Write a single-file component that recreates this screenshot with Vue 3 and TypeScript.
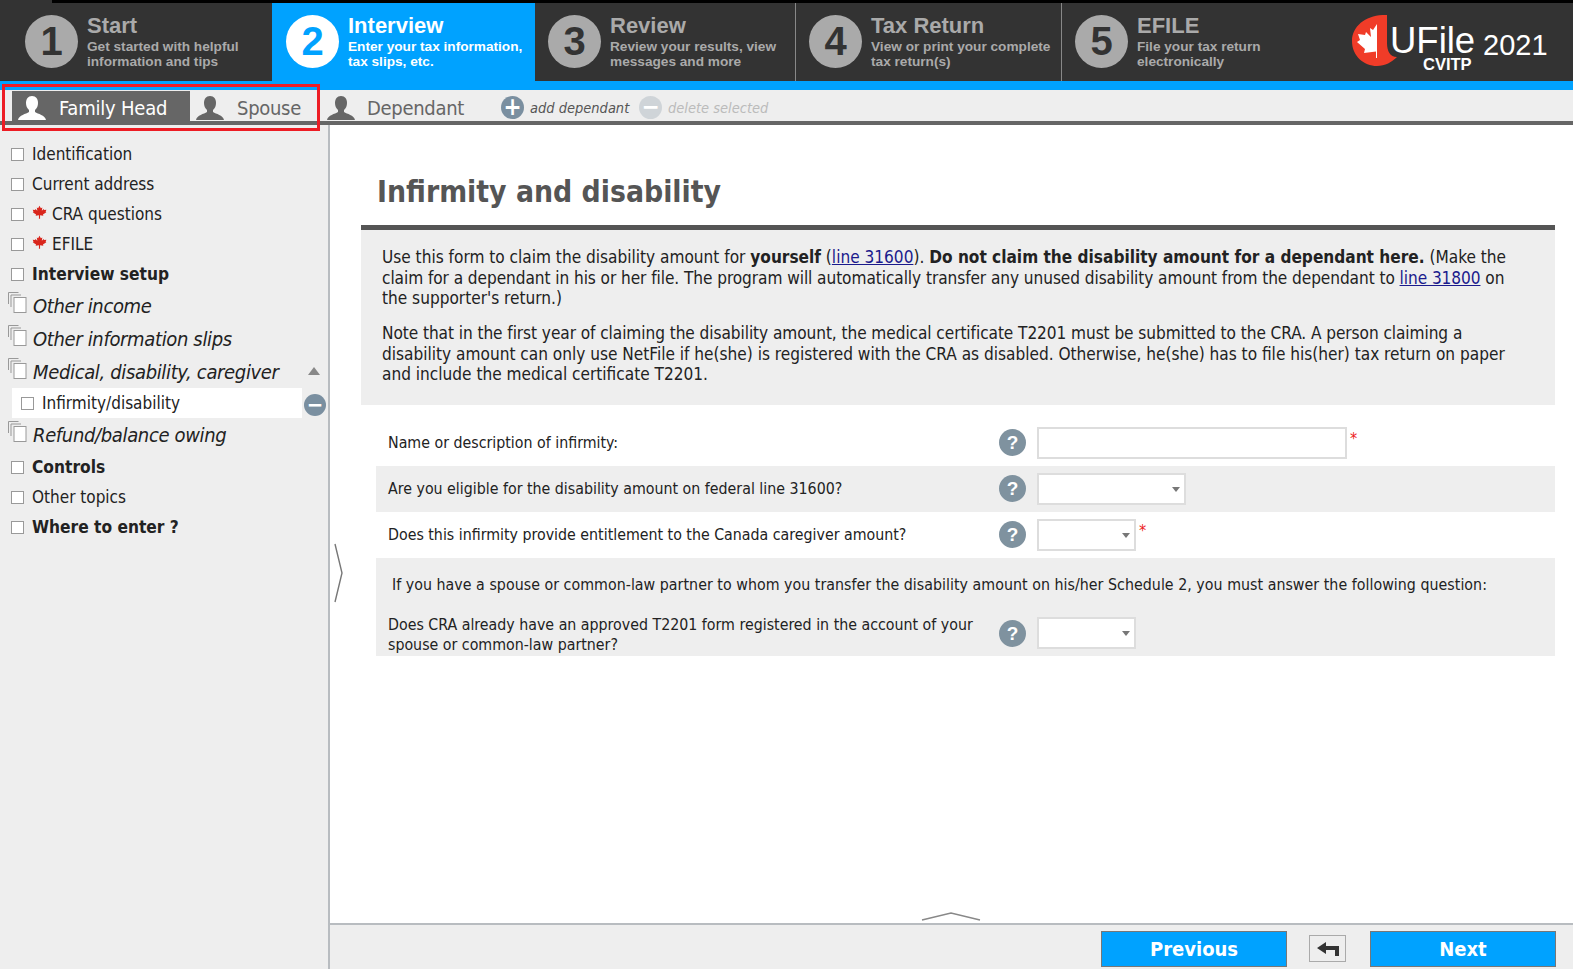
<script setup lang="ts">
interface Step {
  num: number
  title: string
  lines: string[]
  width: number
}

interface NavItem {
  label: string
  kind: 'plain' | 'bold' | 'flagged' | 'group' | 'child'
  collapse?: boolean
}

const steps: Step[] = [
  { num: 1, title: 'Start', lines: ['Get started with helpful', 'information and tips'], width: 272 },
  { num: 2, title: 'Interview', lines: ['Enter your tax information,', 'tax slips, etc.'], width: 263 },
  { num: 3, title: 'Review', lines: ['Review your results, view', 'messages and more'], width: 261 },
  { num: 4, title: 'Tax Return', lines: ['View or print your complete', 'tax return(s)'], width: 266 },
  { num: 5, title: 'EFILE', lines: ['File your tax return', 'electronically'], width: 279 }
]

const navItems: NavItem[] = [
  { label: 'Identification', kind: 'plain' },
  { label: 'Current address', kind: 'plain' },
  { label: 'CRA questions', kind: 'flagged' },
  { label: 'EFILE', kind: 'flagged' },
  { label: 'Interview setup', kind: 'bold' },
  { label: 'Other income', kind: 'group' },
  { label: 'Other information slips', kind: 'group' },
  { label: 'Medical, disability, caregiver', kind: 'group', collapse: true },
  { label: 'Infirmity/disability', kind: 'child' },
  { label: 'Refund/balance owing', kind: 'group' },
  { label: 'Controls', kind: 'bold' },
  { label: 'Other topics', kind: 'plain' },
  { label: 'Where to enter ?', kind: 'bold' }
]

const leafPath =
  'M12 1l2.2 4 2.3-1.1-.8 5.2 3-2.9.8 1.9 3.5-.6-1.2 3.6 1.2.6L17.5 15l.7 2-5.3-.8V22h-1.8v-5.8l-5.3.8.7-2L1.2 11.7l1.2-.6-1.2-3.6 3.5.6.8-1.9 3 2.9-.8-5.2L9.8 5z'
</script>

<template>
  <div class="app">
    <div class="topline"><div class="topline-black"></div></div>
    <header class="steps">
      <div
        v-for="step in steps"
        :key="step.num"
        class="step"
        :class="{ active: step.num === 2 }"
        :style="{ width: step.width + 'px' }"
      >
        <div class="step-num">{{ step.num }}</div>
        <div class="step-text">
          <div class="step-title">{{ step.title }}</div>
          <div v-for="line in step.lines" :key="line" class="step-line">{{ line }}</div>
        </div>
      </div>
      <div class="logo">
        <svg class="logo-mark" width="50" height="52" viewBox="0 0 50 52">
          <path
            d="M37 0C18-1 2 10 2 26c0 15 12 25 25 25 8 0 15-4 20-9-7 0-10-6-10-14z"
            fill="#f03c28"
          />
          <path
            d="M27 9l-4 6-3-2 1 9-5-5-1 3-7-1 2 6-3 2 8 7-1 4 12-1.5V43h1z"
            fill="#fff"
          />
        </svg>
        <div class="logo-name">UFile</div>
        <div class="logo-sub">CVITP</div>
        <div class="logo-year">2021</div>
      </div>
    </header>
    <div class="blue-strip"></div>

    <div class="tabs">
      <div class="tab active">
        <svg class="person" width="30" height="26" viewBox="0 0 30 26">
          <path d="M15 1c4 0 6 3 6 7 0 3-1 5-3 7v2c3 2 10 3 11 8H1c1-5 8-6 11-8v-2c-2-2-3-4-3-7 0-4 2-7 6-7z" />
        </svg>
        <span>Family Head</span>
      </div>
      <div class="tab spouse">
        <svg class="person" width="30" height="26" viewBox="0 0 30 26">
          <path d="M15 1c4 0 6 3 6 7 0 3-1 5-3 7v2c3 2 10 3 11 8H1c1-5 8-6 11-8v-2c-2-2-3-4-3-7 0-4 2-7 6-7z" />
        </svg>
        <span>Spouse</span>
      </div>
      <div class="tab dependant">
        <svg class="person" width="30" height="26" viewBox="0 0 30 26">
          <path d="M15 1c4 0 6 3 6 7 0 3-1 5-3 7v2c3 2 10 3 11 8H1c1-5 8-6 11-8v-2c-2-2-3-4-3-7 0-4 2-7 6-7z" />
        </svg>
        <span>Dependant</span>
      </div>
      <div class="tab-action">
        <span class="round-icon">+</span>
        <span>add dependant</span>
      </div>
      <div class="tab-action disabled">
        <span class="round-icon">&minus;</span>
        <span>delete selected</span>
      </div>
      <div class="red-box"></div>
    </div>

    <div class="body">
      <aside class="sidebar">
        <div v-for="item in navItems" :key="item.label" class="nav-item" :class="item.kind">
          <svg v-if="item.kind === 'group'" class="copy" width="19" height="21" viewBox="0 0 19 21">
            <path d="M.5 12V.5h10" />
            <path d="M3 15V3h10" />
            <rect x="6" y="5.5" width="12" height="15" fill="#fff" />
          </svg>
          <span v-else class="check"></span>
          <svg v-if="item.kind === 'flagged'" class="leaf" width="15" height="15" viewBox="0 0 24 24">
            <path :d="leafPath" fill="#d9261c" />
          </svg>
          <span class="nav-label">{{ item.label }}</span>
          <span v-if="item.collapse" class="collapse"></span>
          <span v-if="item.kind === 'child'" class="remove">&minus;</span>
        </div>
      </aside>

      <main class="main">
        <div class="expander">
          <svg width="12" height="60" viewBox="0 0 12 60">
            <path d="M3 1l7 29-7 29" fill="none" stroke="#777" stroke-width="1.4" />
          </svg>
        </div>
        <div class="content">
          <h1 class="title">Infirmity and disability</h1>
          <section class="notice">
            <p>
              Use this form to claim the disability amount for <b>yourself</b> (<a>line 31600</a>).
              <b>Do not claim the disability amount for a dependant here.</b> (Make the<br />
              <span class="tight">
                claim for a dependant in his or her file. The program will automatically transfer any unused disability
                amount from the dependant to <a>line 31800</a> on</span
              ><br />
              the supporter's return.)
            </p>
            <p>
              <span class="tight">
                Note that in the first year of claiming the disability amount, the medical certificate T2201 must be
                submitted to the CRA. A person claiming a</span
              ><br />
              disability amount can only use NetFile if he(she) is registered with the CRA as disabled. Otherwise,
              he(she) has to file his(her) tax return on paper<br />
              and include the medical certificate T2201.
            </p>
          </section>

          <div class="form">
            <div class="row">
              <label>Name or description of infirmity:</label>
              <span class="help">?</span>
              <span class="field text-field"></span>
              <span class="req">*</span>
            </div>
            <div class="row shaded">
              <label>Are you eligible for the disability amount on federal line 31600?</label>
              <span class="help">?</span>
              <span class="field select wide"></span>
            </div>
            <div class="row">
              <label>Does this infirmity provide entitlement to the Canada caregiver amount?</label>
              <span class="help">?</span>
              <span class="field select"></span>
              <span class="req">*</span>
            </div>
            <div class="spouse-block">
              <div class="spouse-intro">
                If you have a spouse or common-law partner to whom you transfer the disability amount on his/her
                Schedule 2, you must answer the following question:
              </div>
              <div class="row tall">
                <label>
                  Does CRA already have an approved T2201 form registered in the account of your<br />
                  spouse or common-law partner?
                </label>
                <span class="help">?</span>
                <span class="field select"></span>
              </div>
            </div>
          </div>
        </div>

        <div class="pull-up">
          <svg width="60" height="9" viewBox="0 0 60 9">
            <path d="M1 8l29-7 29 7" fill="none" stroke="#888" stroke-width="1.4" />
          </svg>
        </div>
        <footer class="footer">
          <button class="nav-btn">Previous</button>
          <button class="back-btn">
            <svg width="24" height="16" viewBox="0 0 24 16">
              <path d="M1 7l9-6v4h13v10h-4V9H10v4z" fill="#333" />
            </svg>
          </button>
          <button class="nav-btn">Next</button>
        </footer>
      </main>
    </div>
  </div>
</template>

<style>
html,
body {
  margin: 0;
  overflow: hidden;
  background: #fff;
}
</style>

<style scoped>
.app {
  height: 969px;
  display: flex;
  flex-direction: column;
  font-family: 'DejaVu Sans', sans-serif;
  font-stretch: condensed;
  color: #222;
  overflow: hidden;
}

.topline {
  height: 3px;
  background: #333;
}

.topline-black {
  height: 3px;
  margin-left: 52px;
  background: #000;
}

.steps {
  height: 78px;
  display: flex;
  background: #333;
  font-family: 'Liberation Sans', sans-serif;
  font-stretch: normal;
}

.step {
  box-sizing: border-box;
  display: flex;
  align-items: center;
  padding: 0 0 2px 13px;
  gap: 9px;
  color: #aaa;
  border-right: 1px solid #888;
}

.step:first-child {
  padding-left: 25px;
  border-right: none;
}

.step:nth-child(5) {
  border-right: none;
}

.step.active {
  background: #00a2ff;
  color: #fff;
  padding-left: 14px;
  border-right: none;
}

.step-num {
  width: 53px;
  height: 53px;
  flex: none;
  border-radius: 50%;
  background: #aaa;
  color: #333;
  font-size: 40px;
  font-weight: 700;
  line-height: 53px;
  text-align: center;
}

.active .step-num {
  background: #fff;
  color: #00a2ff;
}

.step-title {
  margin: -1px 0 1px;
  font-size: 22px;
  font-weight: 700;
  line-height: 25px;
}

.step-line {
  font-size: 13.65px;
  font-weight: 700;
  line-height: 15px;
  white-space: nowrap;
}

.logo {
  position: relative;
  flex: 1;
}

.logo-mark {
  position: absolute;
  left: 9px;
  top: 12px;
}

.logo-name {
  position: absolute;
  left: 49px;
  top: 24px;
  color: #fff;
  font-size: 36.5px;
  line-height: 28px;
}

.logo-sub {
  position: absolute;
  left: 82px;
  top: 53px;
  color: #fff;
  font-size: 16.5px;
  font-weight: 700;
  line-height: 16px;
}

.logo-year {
  position: absolute;
  left: 142px;
  top: 24px;
  color: #fff;
  font-size: 29px;
  line-height: 36px;
}

.blue-strip {
  height: 9px;
  background: #00a2ff;
}

.tabs {
  position: relative;
  height: 31px;
  display: flex;
  align-items: stretch;
  padding-left: 12px;
  background: #eee;
  border-bottom: 4px solid #666;
  color: #666;
  font-size: 20px;
  letter-spacing: -0.3px;
}

.tab {
  box-sizing: border-box;
  display: flex;
  align-items: center;
  gap: 12px;
  padding-top: 4px;
  white-space: nowrap;
}

.tab.active {
  width: 178px;
  margin-top: 1px;
  padding: 3px 0 0 5px;
  gap: 12px;
  letter-spacing: -0.2px;
  background: #666;
  color: #fff;
}

.tab.spouse {
  width: 136px;
  padding-left: 5px;
}

.tab.dependant {
  width: 175px;
  gap: 11px;
}

.person {
  fill: #666;
  flex: none;
}

.active .person {
  fill: #fff;
}

.tab-action {
  box-sizing: border-box;
  display: flex;
  align-items: center;
  gap: 6px;
  width: 138px;
  padding-top: 4px;
  font-size: 14.5px;
  font-style: italic;
  letter-spacing: 0;
  color: #555;
  white-space: nowrap;
}

.tab-action.disabled {
  color: #bbb;
}

.round-icon {
  width: 23px;
  height: 23px;
  flex: none;
  border-radius: 50%;
  background: #7a8fa0;
  color: #fff;
  font-size: 24px;
  font-style: normal;
  font-weight: 700;
  line-height: 22px;
  text-align: center;
}

.disabled .round-icon {
  background: #cfd4d8;
}

.red-box {
  position: absolute;
  left: 2px;
  top: -6px;
  width: 312px;
  height: 41px;
  border: 3px solid #ed1c24;
}

.body {
  flex: 1;
  display: flex;
  min-height: 0;
}

.sidebar {
  width: 330px;
  flex: none;
  box-sizing: border-box;
  padding-top: 14px;
  background: #eee;
  border-right: 2px solid #b8bcc0;
  font-size: 17px;
}

.nav-item {
  position: relative;
  height: 30px;
  display: flex;
  align-items: center;
  padding-left: 11px;
  white-space: nowrap;
}

.nav-item.bold {
  font-weight: 700;
  font-size: 17.2px;
}

.nav-item.group {
  height: 33px;
  padding-left: 8px;
  font-size: 20px;
  font-style: italic;
  letter-spacing: -0.35px;
}

.nav-item.group:nth-child(10) {
  margin-bottom: 1px;
}

.nav-item.child {
  height: 30px;
  margin-left: 12px;
  width: 290px;
  box-sizing: border-box;
  background: #fff;
  padding-left: 9px;
}

.check {
  width: 11px;
  height: 11px;
  flex: none;
  margin-right: 8px;
  background: #fff;
  border: 1px solid #999;
}

.copy {
  flex: none;
  margin-right: 6px;
  margin-top: -6px;
  fill: none;
  stroke: #999;
}

.leaf {
  flex: none;
  margin: -4px 5px 0 0;
}

.collapse {
  position: absolute;
  right: 8px;
  top: 12px;
  border-left: 6px solid transparent;
  border-right: 6px solid transparent;
  border-bottom: 8px solid #888;
}

.remove {
  position: absolute;
  right: -24px;
  top: 6px;
  width: 22px;
  height: 22px;
  border-radius: 50%;
  background: #7a8fa0;
  color: #fff;
  font-size: 22px;
  font-weight: 700;
  line-height: 21px;
  text-align: center;
}

.main {
  position: relative;
  flex: 1;
  min-width: 0;
  display: flex;
  flex-direction: column;
}

.expander {
  position: absolute;
  left: 2px;
  top: 418px;
}

.content {
  flex: 1;
  padding: 0 18px 0 31px;
}

.title {
  margin: 0;
  height: 100px;
  box-sizing: border-box;
  padding: 48px 0 0 16px;
  color: #555;
  font-size: 29.8px;
  font-weight: 700;
  line-height: 38px;
}

.notice {
  box-sizing: border-box;
  height: 180px;
  padding: 17px 21px 0;
  background: #eee;
  border-top: 5px solid #555;
  font-size: 17.1px;
  line-height: 20.5px;
  white-space: nowrap;
}

.notice p {
  margin: 0 0 14.5px;
}

.notice a {
  color: #1a1a8c;
  text-decoration: underline;
}

.tight {
  letter-spacing: -0.065px;
}

.form {
  margin: 15px 0 0 15px;
  font-size: 15.8px;
}

.row {
  height: 46px;
  display: flex;
  align-items: center;
  padding-left: 12px;
}

.row.shaded {
  background: #eee;
}

.row label {
  width: 611px;
  flex: none;
  line-height: 20px;
  white-space: nowrap;
}

.help {
  width: 27px;
  height: 27px;
  flex: none;
  margin: -2px 11px 0 0;
  border-radius: 50%;
  background: #7f929f;
  color: #fff;
  font-family: 'Liberation Sans', sans-serif;
  font-size: 19px;
  font-weight: 700;
  line-height: 27px;
  text-align: center;
}

.field {
  position: relative;
  box-sizing: border-box;
  height: 32px;
  background: #fff;
  border: 2px solid #ddd;
}

.text-field {
  width: 310px;
}

.select {
  width: 99px;
}

.select.wide {
  width: 149px;
}

.select::after {
  content: '';
  position: absolute;
  right: 4px;
  top: 12px;
  border-left: 4px solid transparent;
  border-right: 4px solid transparent;
  border-top: 5px solid #777;
}

.req {
  margin: -10px 0 0 3px;
  color: #ed1c24;
  font-size: 16px;
}

.spouse-block {
  height: 98px;
  background: #eee;
}

.spouse-intro {
  padding: 17px 0 0 16px;
  line-height: 20px;
  letter-spacing: 0.035px;
  white-space: nowrap;
}

.row.tall {
  height: 46px;
  margin-top: 15px;
}

.row.tall label {
  margin-top: 4px;
}

.row.tall .help {
  margin-top: 0;
}

.pull-up {
  height: 9px;
  display: flex;
  justify-content: center;
  padding: 0 2px 2px 0;
}

.footer {
  height: 46px;
  box-sizing: border-box;
  display: flex;
  justify-content: flex-end;
  align-items: flex-start;
  padding: 6px 17px 0 0;
  background: #eee;
  border-top: 2px solid #b8bcc0;
}

.nav-btn {
  width: 186px;
  height: 36px;
  background: #00a2ff;
  border: 1px solid #777;
  color: #fff;
  font-family: 'DejaVu Sans', sans-serif;
  font-stretch: condensed;
  font-size: 20px;
  font-weight: 700;
  padding: 0;
}

.back-btn {
  width: 37px;
  height: 27px;
  margin: 4px 24px 0 22px;
  padding: 0;
  display: flex;
  align-items: center;
  justify-content: center;
  background: #eee;
  border: 1px solid #aaa;
}
</style>
